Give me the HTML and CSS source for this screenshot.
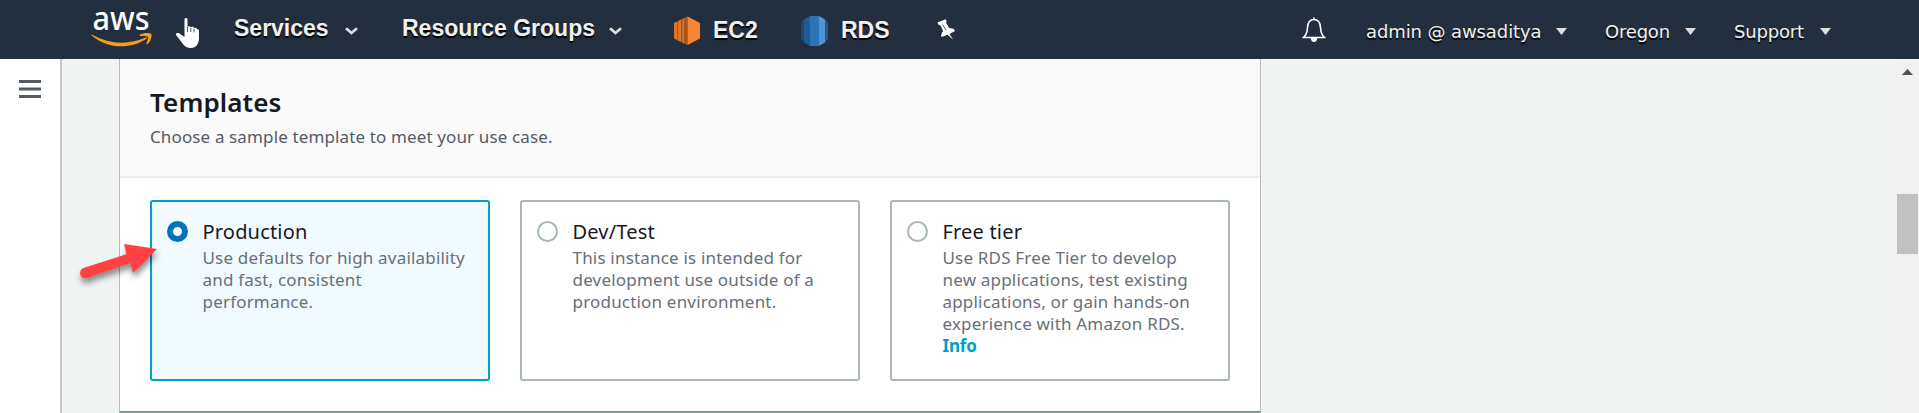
FILE: index.html
```html
<!DOCTYPE html>
<html lang="en">
<head>
<meta charset="utf-8">
<title>RDS Management Console</title>
<link rel="stylesheet" href="styles.css">
</head>
<body>
<header class="topbar">
  <svg class="logo" width="62" height="48" viewBox="0 -10 62 48" role="img" aria-label="aws">
    <text class="logo-text" x="1.5" y="19.5" textLength="57" lengthAdjust="spacingAndGlyphs">aws</text>
    <path d="M.3 25.2Q0 24.3 1.2 24.7C19 34.5 37 35 54.800 27.500Q57 27 55.500 28.800C38 40.500 15 38 .3 25.200z" fill="#f79a20"/>
    <path d="M48.500 24.800C52 22.500 58.500 22.300 60.500 24C61 27.500 59 32.500 56.300 34.200C55.500 34.500 55.200 34 55.500 33.300C56.500 30.500 57.500 28 57 27C55.500 25.800 51.500 26 49 26.200Z" fill="#f79a20"/>
  </svg>
  <nav class="nav">
    <a class="menu services">Services<svg class="chev" width="13" height="8" viewBox="0 0 13 8"><path d="M1 1.200L6.500 6L12 1.200"/></svg></a>
    <a class="menu groups">Resource Groups<svg class="chev" width="13" height="8" viewBox="0 0 13 8"><path d="M1 1.200L6.500 6L12 1.200"/></svg></a>
    <a class="service ec2"><svg width="27" height="30" viewBox="0 0 27 30">
      <path d="M0 7L3 5.500V24L0 22.500zM4 5L7 3.500V26L4 24.500z" fill="#dc7529"/><path d="M3 5.500H4V24.500H3zM7 3.500L13.500 .5V29L7 26z" fill="#a9551c"/><path d="M8.500 3L10 2.200V27.500L8.500 26.800z" fill="#dc7529"/><path d="M13.500 .5L26 7V22.500L13.500 29z" fill="#f78536"/></svg><span class="txt">EC2</span></a>
    <a class="service rds"><svg width="28" height="30" viewBox="0 0 28 30">
      <path d="M0 6L3 3.500V26.500L0 23z" fill="#174973"/><path d="M3 3.500L9 0V30L3 26.500z" fill="#205b98"/><path d="M9 0H18V30H9z" fill="#2e73b8"/><path d="M18 0L24 3.500V26.500L18 30z" fill="#5294cf"/><path d="M24 3.500L27 7V23L24 26.500z" fill="#205b98"/></svg><span class="txt">RDS</span></a>
    <svg class="pin" width="19" height="22" viewBox="0 0 19 22"><path d="M.5 3.500L8.500 .3L9.700 2.200L9 3.800L12.500 9.300C15.500 9 17.500 10 18 12L12.500 15L16 20.500L10.500 15.800L4.500 18C3.800 15.500 4.500 13.500 6.200 12.200L3.500 6.500L1.500 5.800z" fill="#fff"/><path d="M5.500 5.500L9 11" stroke="#232f3e" stroke-width=".8"/></svg>
  </nav>
  <div class="account">
    <svg class="bell" width="24" height="26" viewBox="0 0 24 26"><path d="M12 2.500V.5M1.500 20.500C4.500 18 5.300 15 5.500 10.500C5.800 5.500 8 2.500 12 2.500S18.200 5.500 18.500 10.500C18.700 15 19.500 18 22.500 20.500z" fill="none" stroke="#fff" stroke-width="1.600"/><path d="M8.800 21H15.200C15.200 26.300 8.800 26.300 8.800 21z" fill="#fff"/></svg>
    <a class="acct user"><span class="user-name">admin @ awsaditya</span><i class="tri"></i></a>
    <a class="acct region"><span class="region-name">Oregon</span><i class="tri"></i></a>
    <a class="acct support"><span class="support-name">Support</span><i class="tri"></i></a>
  </div>
  <svg class="pointer" width="26" height="33" viewBox="0 0 26 33"><path d="M9.500 2.500C9.500 .5 12.500 .5 12.500 2.500V10C13 8.800 15.500 9 15.500 10.800C16 9.300 19 9.500 19 11.500C20 10.300 22 10.800 22 12.500C23 12 24 12.500 24 14V21C24 27 21 31 16 31C12 31 10 29.500 8 27L1 18C.5 16 3 15.500 4.500 16.500L9.500 20z" fill="#fff"/><path d="M12.500 10V15M15.800 11V15M19 12V15.500" stroke="#232f3e" stroke-width=".8"/></svg>
</header>
<div class="body">
  <aside class="side"><svg width="22" height="18" viewBox="0 0 22 18"><path d="M0 0H22V3H0zM0 7.500H22V10.500H0zM0 15H22V18H0z" fill="#545b64"/></svg></aside>
  <main class="content">
    <section class="panel">
      <div class="head">
        <h2><span class="title">Templates</span></h2>
        <p>Choose a sample template to meet your use case.</p>
      </div>
      <div class="tiles">
        <label class="tile selected"><span class="radio"></span><span class="copy"><b>Production</b><span>Use defaults for high availability<br>and fast, consistent<br>performance.</span></span></label>
        <label class="tile"><span class="radio"></span><span class="copy"><b>Dev/Test</b><span>This instance is intended for<br>development use outside of a<br>production environment.</span></span></label>
        <label class="tile"><span class="radio"></span><span class="copy"><b>Free tier</b><span>Use RDS Free Tier to develop<br>new applications, test existing<br>applications, or gain hands-on<br>experience with Amazon RDS.<br><a class="info">Info</a></span></span></label>
      </div>
    </section>
  </main>
  <div class="scroll"><svg width="11" height="6" viewBox="0 0 11 6"><path d="M0 6L5.500 0L11 6z" fill="#505050"/></svg><div class="thumb"></div></div>
</div>
<svg class="arrow" width="90" height="50" viewBox="0 0 90 50"><path d="M5.500 28L48.500 14.300L46 4L79 9L55 33L52.500 23L8.500 37.700C2 39.500 -.5 30.500 5.500 28z" fill="#ff4141"/></svg>
</body>
</html>
```
FILE: styles.css
```css
* { box-sizing: border-box; }
body { margin: 0; height: 413px; overflow: hidden; background: #f2f3f3; font-family: "Noto Sans", sans-serif; color: #16191f; display: flex; flex-direction: column; }
.topbar { height: 59px; flex: none; background: #232f3e; display: flex; align-items: flex-start; padding-left: 91px; position: relative; color: #f0f0f0; }
.logo { flex: none; overflow: visible; }
.logo-text { font: 500 32px "Noto Sans", sans-serif; fill: #fff; }
.nav { display: flex; margin-left: 81px; font: bold 23px/28px "Liberation Sans", sans-serif; text-shadow: 0 2px 1px #000; }
.nav a { display: flex; white-space: nowrap; }
.menu { padding-top: 14px; }
.chev { fill: none; stroke: #ddd; stroke-width: 2.8; margin: 13px 0 0 auto; }
.services { width: 124px; }
.groups { width: 220px; margin-left: 44px; }
.service { padding-top: 16px; }
.service .txt { margin-left: 12px; }
.ec2 { width: 84px; margin-left: 52px; }
.rds { width: 88px; margin-left: 43px; }
.nav svg { flex: none; }
.pin { margin: 19px 0 0 48px; }
.account { display: flex; margin-left: auto; margin-right: 88px; font: 18px/24px "DejaVu Sans", sans-serif; text-shadow: 0 2px 1px #000; white-space: nowrap; }
.user-name { letter-spacing: -.1px; }
.region-name, .support-name { letter-spacing: -.2px; }
.bell { margin: 17px 40px 0 0; }
.acct { display: flex; margin-top: 20px; }
.user { width: 201px; }
.region { width: 91px; margin-left: 38px; }
.support { width: 97px; margin-left: 38px; }
.tri { margin: 8px 0 0 auto; width: 11px; height: 7px; background: #ddd; clip-path: polygon(0 0, 100% 0, 50% 100%); }
.pointer { position: absolute; left: 175px; top: 17px; }
.body { display: flex; flex: 1; min-height: 0; }
.side { width: 62px; background: #fff; border-right: 2px solid #c5cbcb; padding: 21px 0 0 19px; flex: none; }
.side svg { display: block; }
.content { flex: 1; padding-left: 57px; }
.panel { width: 1142px; height: 354px; background: #fff; border: 1px solid #b5bcbc; border-top: 0; border-bottom: 2px solid #879596; }
.head { height: 119px; background: #fafafa; border-bottom: 2px solid #eaeded; padding: 25px 0 0 30px; }
h2 { margin: 0; font: 600 26px/36px "Noto Sans", sans-serif; letter-spacing: .1px; }
.head p { margin: 6px 0 0; font-size: 17px; line-height: 22px; letter-spacing: .13px; color: #545b64; }
.tiles { display: grid; grid-template-columns: repeat(3, 340px); gap: 30px; padding: 22px 0 0 30px; }
.tile { height: 181px; border: 2px solid #aab7b8; border-radius: 3px; padding: 19px 0 0 15px; display: flex; }
.selected { border-color: #00a1c9; background: #f1faff; }
.radio { width: 21px; height: 21px; border: 2px solid #aab7b8; border-radius: 50%; flex: none; background: #fff; }
.selected .radio { border: 6px solid #0073bb; }
.copy { margin: -1px 0 0 14.5px; display: block; font-size: 17px; line-height: 22px; letter-spacing: .19px; color: #687078; white-space: nowrap; }
.copy b { display: block; font-weight: 400; font-size: 20px; line-height: 24px; color: #16191f; margin-bottom: 3px; }
.info { color: #00a1c9; font-weight: 700; letter-spacing: -.2px; }
.scroll { width: 24px; background: #f1f1f1; padding: 10px 1px 0 2px; }
.scroll svg { display: block; margin: 0 5px; }
.thumb { height: 60px; background: #c1c1c1; margin-top: 119px; }
.arrow { position: absolute; left: 78px; top: 240px; overflow: visible; filter: drop-shadow(1px 5px 3px rgba(0,0,0,.45)); }
```
